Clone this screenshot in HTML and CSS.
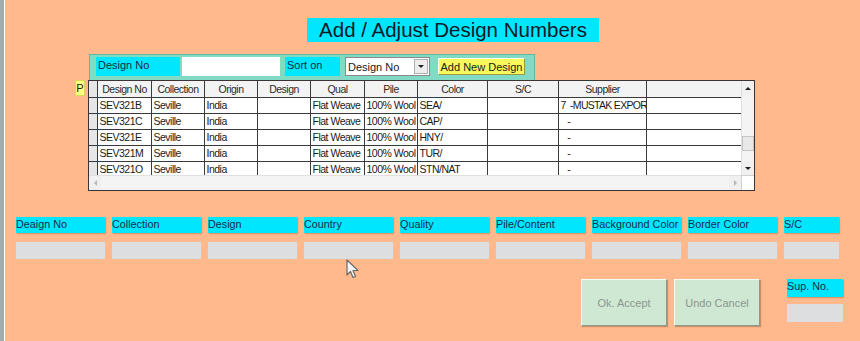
FILE: index.html
```html
<!DOCTYPE html>
<html lang="en">
<head>
    <meta charset="UTF-8">
    <meta name="viewport" content="width=device-width, initial-scale=1.0">
    <title>Add / Adjust Design Numbers</title>
    <link rel="stylesheet" href="styles.css">
</head>
<body>
    <div class="window">
        <div class="title">Add / Adjust Design Numbers</div>

        <div class="browse">
            <div class="p-col">
                <div class="p-btn">P</div>
            </div>
            <div class="panel">
                <div class="filter-bar">
                    <div class="lbl lbl-design">Design No</div>
                    <div class="text-input"></div>
                    <div class="lbl lbl-sort">Sort on</div>
                    <div class="select">
                        <span>Design No</span>
                        <span class="select-btn"><i class="arrow-down"></i></span>
                    </div>
                    <button class="add-btn">Add New Design</button>
                </div>

                <div class="grid">
                    <div class="grid-body">
                        <table class="rows">
                            <colgroup>
                                <col style="width:8px">
                                <col style="width:54px">
                                <col style="width:53px">
                                <col style="width:53px">
                                <col style="width:53px">
                                <col style="width:54px">
                                <col style="width:53px">
                                <col style="width:70px">
                                <col style="width:71px">
                                <col style="width:88px">
                                <col style="width:95px">
                            </colgroup>
                            <thead>
                                <tr>
                                    <th class="rh"></th>
                                    <th>Design No</th>
                                    <th>Collection</th>
                                    <th>Origin</th>
                                    <th>Design</th>
                                    <th>Qual</th>
                                    <th>Pile</th>
                                    <th>Color</th>
                                    <th>S/C</th>
                                    <th>Supplier</th>
                                    <th></th>
                                </tr>
                            </thead>
                            <tbody>
                                <tr>
                                    <td class="rh"></td>
                                    <td>SEV321B</td><td>Seville</td><td>India</td><td></td>
                                    <td>Flat Weave</td><td>100% Wool</td><td>SEA/</td><td></td>
                                    <td class="sup">7  -MUSTAK EXPOR</td><td></td>
                                </tr>
                                <tr>
                                    <td class="rh"></td>
                                    <td>SEV321C</td><td>Seville</td><td>India</td><td></td>
                                    <td>Flat Weave</td><td>100% Wool</td><td>CAP/</td><td></td>
                                    <td class="sup">   -</td><td></td>
                                </tr>
                                <tr>
                                    <td class="rh"></td>
                                    <td>SEV321E</td><td>Seville</td><td>India</td><td></td>
                                    <td>Flat Weave</td><td>100% Wool</td><td>HNY/</td><td></td>
                                    <td class="sup">   -</td><td></td>
                                </tr>
                                <tr>
                                    <td class="rh"></td>
                                    <td>SEV321M</td><td>Seville</td><td>India</td><td></td>
                                    <td>Flat Weave</td><td>100% Wool</td><td>TUR/</td><td></td>
                                    <td class="sup">   -</td><td></td>
                                </tr>
                                <tr>
                                    <td class="rh"></td>
                                    <td>SEV321O</td><td>Seville</td><td>India</td><td></td>
                                    <td>Flat Weave</td><td>100% Wool</td><td>STN/NAT</td><td></td>
                                    <td class="sup">   -</td><td></td>
                                </tr>
                            </tbody>
                        </table>
                    </div>
                    <div class="vscroll">
                        <span class="sb-btn"><i class="arrow-up"></i></span>
                        <span class="sb-track"><span class="sb-thumb"></span></span>
                        <span class="sb-btn"><i class="arrow-down"></i></span>
                    </div>
                    <div class="hscroll">
                        <span class="sb-btn flat"><i class="arrow-left"></i></span>
                        <span class="sb-track"></span>
                        <span class="sb-btn flat"><i class="arrow-right"></i></span>
                    </div>
                    <div class="corner"></div>
                </div>
            </div>
        </div>

        <div class="fields">
            <div class="field"><div class="field-lbl">Deaign No</div><div class="field-box"></div></div>
            <div class="field"><div class="field-lbl">Collection</div><div class="field-box"></div></div>
            <div class="field"><div class="field-lbl">Design</div><div class="field-box"></div></div>
            <div class="field"><div class="field-lbl">Country</div><div class="field-box"></div></div>
            <div class="field"><div class="field-lbl">Quality</div><div class="field-box"></div></div>
            <div class="field"><div class="field-lbl">Pile/Content</div><div class="field-box"></div></div>
            <div class="field"><div class="field-lbl">Background Color</div><div class="field-box"></div></div>
            <div class="field"><div class="field-lbl">Border Color</div><div class="field-box"></div></div>
            <div class="field"><div class="field-lbl">S/C</div><div class="field-box"></div></div>
        </div>

        <div class="actions">
            <button class="act-btn">Ok. Accept</button>
            <button class="act-btn">Undo Cancel</button>
            <div class="sup-group">
                <div class="field-lbl sup-lbl">Sup. No.</div>
                <div class="field-box"></div>
            </div>
        </div>

        <svg class="cursor" width="13" height="20" viewBox="0 0 13 20">
            <path d="M1 1 L1 16 L4.5 12.5 L7 18.5 L9.5 17.5 L7 11.5 L12 11.5 Z" fill="#f4f4f4" stroke="#6a6a6a" stroke-width="1.2" stroke-linejoin="round"/>
        </svg>
    </div>
</body>
</html>
```

FILE: styles.css
```css
* {
    margin: 0;
    padding: 0;
    box-sizing: border-box;
    font-family: "Liberation Sans", Arial, sans-serif;
}

body {
    background-color: #ffb98c;
    overflow: hidden;
}

.window {
    position: relative;
    width: 860px;
    height: 341px;
    background: #ffb98c;
    border-left: 4px solid #a9a9a9;
    box-shadow: inset 1px 0 0 #ffffff;
    display: flex;
    flex-direction: column;
    align-items: flex-start;
    padding-top: 18px;
}

.title {
    margin-left: 303px;
    width: 292px;
    height: 24px;
    background: #00e6ff;
    color: #0c1a28;
    font-size: 20.5px;
    line-height: 24px;
    text-align: center;
}

/* browse area */
.browse {
    display: flex;
    margin-top: 12px;
    margin-left: 71px;
}

.p-col {
    width: 13px;
    padding-top: 26px;
}

.p-btn {
    width: 10px;
    height: 16px;
    background: #ffff80;
    border: 1px solid #d8d860;
    font-size: 11px;
    line-height: 14px;
    text-align: center;
    color: #202020;
}

.panel {
    display: flex;
    flex-direction: column;
}

.filter-bar {
    width: 446px;
    height: 26px;
    margin-left: 1px;
    background: #80dac4;
    border: 1px solid #5fbba6;
    border-bottom: none;
    display: flex;
    align-items: flex-start;
    padding: 2px 0 0 6px;
}

.lbl {
    height: 19px;
    background: #00e6ff;
    color: #1b2a48;
    font-size: 11px;
    padding: 2px 0 0 2px;
}

.lbl-design {
    width: 84px;
}

.text-input {
    width: 98px;
    height: 19px;
    margin-left: 2px;
    background: #ffffff;
}

.lbl-sort {
    width: 55px;
    margin-left: 5px;
}

.select {
    width: 85px;
    height: 19px;
    margin-left: 5px;
    background: #ffffff;
    border: 1px solid #8a8a8a;
    display: flex;
    align-items: center;
    justify-content: space-between;
    font-size: 11px;
    color: #202020;
    padding-left: 2px;
}

.select-btn {
    width: 14px;
    height: 15px;
    margin-right: 1px;
    background: #ededed;
    border: 1px solid #b0b0b0;
    display: flex;
    align-items: center;
    justify-content: center;
}

.add-btn {
    width: 87px;
    height: 17px;
    margin: 1px 0 0 8px;
    background: #f8f85a;
    border: 1px solid;
    border-color: #fffff0 #9a9a40 #9a9a40 #fffff0;
    font-size: 11px;
    color: #202020;
}

/* grid */
.grid {
    width: 667px;
    height: 111px;
    background: #ffffff;
    border: 1px solid #3c3434;
    display: grid;
    grid-template-columns: 652px 13px;
    grid-template-rows: 94px 15px;
}

.grid-body {
    overflow: hidden;
}

.rows {
    width: 652px;
    table-layout: fixed;
    border-collapse: collapse;
}

.rows th,
.rows td {
    height: 16px;
    border: 1px solid #3a3a3a;
    font-size: 10.5px;
    letter-spacing: -0.5px;
    color: #1a1a1a;
    white-space: pre;
    overflow: hidden;
    padding: 0 1px 0 2px;
    line-height: 14px;
}

.rows tr:first-child th,
.rows tr:first-child td {
    border-top: none;
}

.rows th:first-child,
.rows td:first-child {
    border-left: none;
}

.rows th {
    background: #f3f3f3;
    font-weight: normal;
    text-align: center;
    color: #2a2a2a;
}

.rows td {
    text-align: left;
}

.rows td.sup {
    letter-spacing: -0.7px;
}

.rows .rh {
    background: #e6e6e6;
    padding: 0;
}

.vscroll {
    display: flex;
    flex-direction: column;
    background: #f0f0f0;
    border-left: 1px solid #e0e0e0;
}

.hscroll {
    display: flex;
    background: #f0f0f0;
    border-top: 1px solid #e0e0e0;
}

.sb-btn {
    width: 12px;
    height: 14px;
    flex: none;
    background: #f0f0f0;
    display: flex;
    align-items: center;
    justify-content: center;
}

.sb-track {
    flex: 1;
    position: relative;
    background: #f4f4f4;
}

.sb-thumb {
    position: absolute;
    left: 0;
    top: 41px;
    width: 12px;
    height: 15px;
    background: #e8e8e8;
    border: 1px solid #c4c4c4;
}

.corner {
    background: #ffffff;
    border-left: 1px solid #cfcfcf;
    border-top: 1px solid #cfcfcf;
}

.arrow-up,
.arrow-down {
    width: 0;
    height: 0;
    border-left: 3px solid transparent;
    border-right: 3px solid transparent;
}

.arrow-up {
    border-bottom: 3px solid #202020;
}

.arrow-down {
    border-top: 3px solid #202020;
}

.arrow-left,
.arrow-right {
    width: 0;
    height: 0;
    border-top: 3px solid transparent;
    border-bottom: 3px solid transparent;
}

.arrow-left {
    border-right: 3px solid #b8b8b8;
}

.arrow-right {
    border-left: 3px solid #b8b8b8;
}

/* entry fields */
.fields {
    display: grid;
    grid-template-columns: repeat(8, 89px) 55px;
    column-gap: 7px;
    margin-top: 26px;
    margin-left: 12px;
}

.field {
    display: flex;
    flex-direction: column;
    gap: 9px;
}

.field-lbl {
    height: 16px;
    background: #00e6ff;
    color: #1b2a48;
    font-size: 10.8px;
    line-height: 12px;
    padding-top: 1px;
    white-space: nowrap;
    overflow: hidden;
    box-shadow: 1px 1px 1px rgba(150, 90, 40, 0.35);
}

.field-box {
    height: 17px;
    background: #dcdedf;
}

.actions {
    display: flex;
    align-items: flex-start;
    gap: 7px;
    margin-top: 20px;
    margin-left: 577px;
}

.act-btn {
    width: 86px;
    height: 47px;
    background: #cfe8d3;
    border: 1px solid;
    border-color: #f4fff6 #8a9a8e #8a9a8e #f4fff6;
    box-shadow: 1px 1px 1px rgba(120, 80, 50, 0.4);
    font-size: 11px;
    color: #8c968f;
}

.sup-group {
    width: 56px;
    margin-left: 20px;
    display: flex;
    flex-direction: column;
    gap: 7px;
}

.sup-lbl {
    height: 18px;
}

.sup-group .field-box {
    height: 18px;
}

.cursor {
    position: absolute;
    left: 342px;
    top: 259px;
}
```
